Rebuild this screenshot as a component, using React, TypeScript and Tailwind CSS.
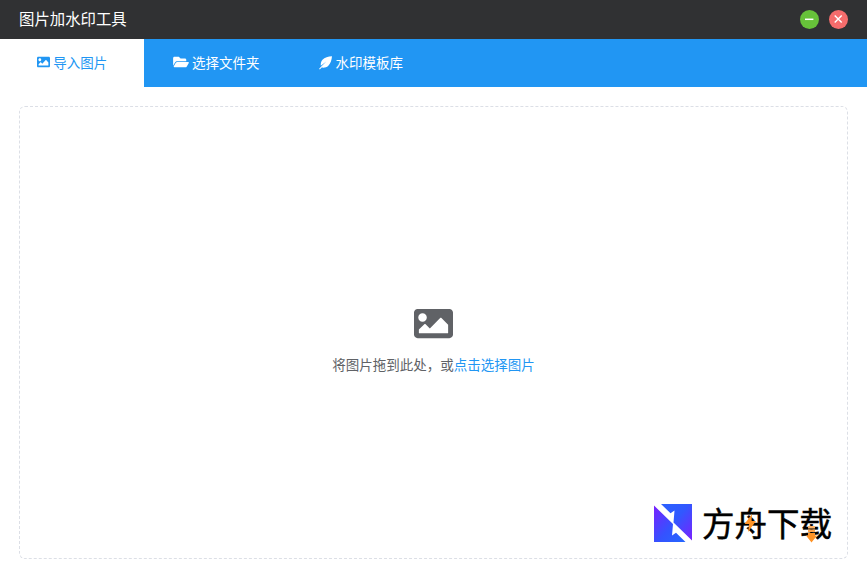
import { useState } from 'react';
import type { ReactNode } from 'react';
import { FaImage, FaFolderOpen } from 'react-icons/fa';

type TabKey = 'import' | 'folder' | 'template';

function QuillIcon() {
  return (
    <svg viewBox="0 0 13 14" className="h-[14px] w-[13px]" fill="currentColor">
      <path d="M13 .3C9.200.4 5.600 1.500 3.500 3.800 2 5.500 1.600 7.500 1.800 9.700L7.300 5.600 2 10.800.1 12.800l.7.7 1.900-1.900c2.400.4 4.900-.1 6.400-1.500 2.400-2.300 3.600-6 3.900-9.800z" />
    </svg>
  );
}

const tabs: { key: TabKey; label: string; icon: ReactNode; width: string }[] = [
  { key: 'import', label: '导入图片', icon: <FaImage preserveAspectRatio="none" className="h-[14px] w-[13px] -translate-y-px" />, width: 'w-[144px]' },
  { key: 'folder', label: '选择文件夹', icon: <FaFolderOpen className="h-[14px] w-[16px] -translate-y-px" />, width: 'w-[144px]' },
  { key: 'template', label: '水印模板库', icon: <QuillIcon />, width: 'w-[146px]' },
];

function TitleBar() {
  return (
    <header className="flex h-[39px] items-center justify-between bg-[#303133] px-[19px]">
      <h1 className="pb-[2px] text-[15.4px] leading-none text-white">图片加水印工具</h1>
      <div className="flex gap-[10px]">
        <button aria-label="最小化" className="flex size-[19px] items-center justify-center rounded-full bg-[#67c23a]">
          <svg viewBox="0 0 19 19" className="size-[19px]" fill="none" stroke="#fff" strokeWidth="1.5">
            <path d="M5 9.3h8.4" />
          </svg>
        </button>
        <button aria-label="关闭" className="flex size-[19px] items-center justify-center rounded-full bg-[#f56c6c]">
          <svg viewBox="0 0 19 19" className="size-[19px]" fill="none" stroke="#fff" strokeWidth="1.4">
            <path d="M5.7 5.5l7 7M12.7 5.5l-7 7" />
          </svg>
        </button>
      </div>
    </header>
  );
}

function BrandLogo() {
  return (
    <div className="absolute bottom-[14px] right-[15px] flex h-[42px] items-center gap-[9.5px]">
      <svg viewBox="0 0 38 38" className="size-[38px]">
        <defs>
          <linearGradient id="upper" x1="0" y1="0" x2="1" y2="1">
            <stop offset="0" stopColor="#2b62ff" />
            <stop offset="0.45" stopColor="#3158ff" />
            <stop offset="1" stopColor="#7a20ff" />
          </linearGradient>
          <linearGradient id="lower" x1="0" y1="0" x2="1" y2="1">
            <stop offset="0" stopColor="#7a20ff" />
            <stop offset="0.55" stopColor="#3552ff" />
            <stop offset="1" stopColor="#2468ff" />
          </linearGradient>
        </defs>
        <path d="M7 0H38v36.5L19.5 18.5 20.5 6.500 16.500 9.200z" fill="url(#upper)" />
        <path d="M0 1.5L19 20 18 31.500l4-2.700L31.500 38H0z" fill="url(#lower)" />
      </svg>
      <div className="relative whitespace-nowrap text-[32.5px] leading-[42px] text-black">
        <span className="relative -top-px [-webkit-text-stroke:0.5px_#000]">方舟下载</span>
        <svg viewBox="0 0 12 18" className="absolute left-[42px] top-[12px] h-[18px] w-[12px]">
          <path d="M8 0L.5 10h4.700L4 18l8-11H7.500z" fill="#ff9326" />
        </svg>
        <svg viewBox="0 0 11 17" className="absolute left-[104px] top-[24px] h-[17px] w-[11px]" fill="#ff9326">
          <path d="M2 0h7v2.500H2z" fill="#ffb366" />
          <path d="M2 3.500h7V6H2z" fill="#ffa54d" />
          <path d="M2 7h7v2.500h2L5.500 16.500 0 9.500h2z" />
        </svg>
      </div>
    </div>
  );
}

export default function App() {
  const [active, setActive] = useState<TabKey>('import');

  return (
    <div className="flex h-screen flex-col overflow-hidden bg-white font-['Noto_Sans_CJK_SC',sans-serif]">
      <TitleBar />

      {/* Tabs */}
      <nav className="flex h-[48px] shrink-0 bg-[#2196f3]">
        {tabs.map((tab) => (
          <button
            key={tab.key}
            onClick={() => setActive(tab.key)}
            className={`flex items-center justify-center gap-[3.5px] text-[13.5px] leading-none ${tab.width} ${
              active === tab.key ? 'bg-white text-[#2196f3]' : 'text-white'
            }`}
          >
            {tab.icon}
            {tab.label}
          </button>
        ))}
      </nav>

      {/* Drop zone */}
      <main className="relative m-[19px] flex flex-1 flex-col items-center rounded-[6px] border border-dashed border-[#dcdfe6] pt-[197px]">
        <FaImage className="size-[39px] text-[#606266]" />
        <p className="mt-[11px] text-[13.5px] leading-[20px] text-[#606266]">
          将图片拖到此处，或
          <button className="text-[#2196f3]">点击选择图片</button>
        </p>
        <BrandLogo />
      </main>
    </div>
  );
}
